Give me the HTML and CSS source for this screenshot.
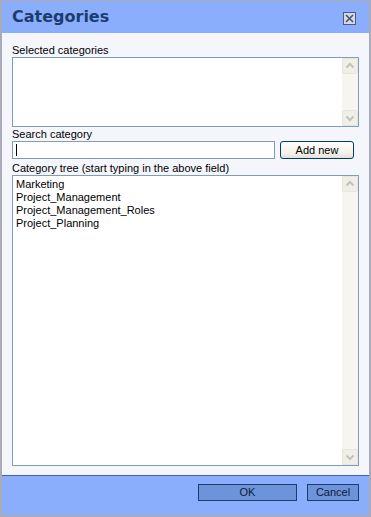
FILE: index.html
```html
<!DOCTYPE html>
<html>
<head>
<meta charset="utf-8">
<link rel="stylesheet" href="styles.css">
</head>
<body>
<div class="dialog">
  <div class="header">
    <h1 class="title">Categories</h1>
    <span class="close"><svg width="11" height="11" viewBox="0 0 11 11"><path d="M2 2 L9 9 M9 2 L2 9" stroke="#4a5470" stroke-width="1.6" fill="none"/></svg></span>
  </div>
  <div class="body">
    <div class="label">Selected categories</div>
    <div class="listbox selected">
      <div class="content"></div>
      <div class="scrollbar">
        <span class="sb-btn"><svg width="14" height="14" viewBox="0 0 14 14"><path d="M3.5 8.5 L7 5 L10.5 8.5" stroke="#c4c3bb" stroke-width="2" fill="none"/></svg></span>
        <span class="sb-track"></span>
        <span class="sb-btn"><svg width="14" height="14" viewBox="0 0 14 14"><path d="M3.5 5.5 L7 9 L10.5 5.5" stroke="#c4c3bb" stroke-width="2" fill="none"/></svg></span>
      </div>
    </div>
    <div class="label">Search category</div>
    <div class="search-row">
      <div class="input"><span class="caret"></span></div>
      <button class="add-btn">Add new</button>
    </div>
    <div class="label">Category tree (start typing in the above field)</div>
    <div class="listbox tree">
      <ul class="items">
        <li>Marketing</li>
        <li>Project_Management</li>
        <li>Project_Management_Roles</li>
        <li>Project_Planning</li>
      </ul>
      <div class="scrollbar">
        <span class="sb-btn"><svg width="14" height="14" viewBox="0 0 14 14"><path d="M3.5 8.5 L7 5 L10.5 8.5" stroke="#c4c3bb" stroke-width="2" fill="none"/></svg></span>
        <span class="sb-track"></span>
        <span class="sb-btn"><svg width="14" height="14" viewBox="0 0 14 14"><path d="M3.5 5.5 L7 9 L10.5 5.5" stroke="#c4c3bb" stroke-width="2" fill="none"/></svg></span>
      </div>
    </div>
  </div>
  <div class="footer">
    <button class="ftbtn ok">OK</button>
    <button class="ftbtn cancel">Cancel</button>
  </div>
</div>
</body>
</html>
```
FILE: styles.css
```css
html, body {
  margin: 0;
  padding: 0;
  background: #ffffff;
}
body {
  font-family: "Liberation Sans", Arial, sans-serif;
  font-size: 11px;
  color: #000;
}
.dialog {
  box-sizing: border-box;
  width: 371px;
  height: 517px;
  border-style: solid;
  border-color: #a9acb8;
  border-width: 1px 2px 2px 2px;
  display: flex;
  flex-direction: column;
  background: #f4f6fc;
}
.header {
  height: 32px;
  flex: none;
  background: #8aaefc;
  display: flex;
  align-items: center;
  justify-content: space-between;
  padding: 0 13px 0 10px;
}
.title {
  margin: 0;
  font: bold 16px "DejaVu Sans", Verdana, sans-serif;
  color: #1b3d6d;
  line-height: 20px;
}
.close {
  box-sizing: border-box;
  width: 13px;
  height: 13px;
  border: 1px solid #4f5a78;
  background: #d3d8ea;
  display: flex;
  align-items: center;
  justify-content: center;
  margin-top: 2px;
}
.close svg { display: block; }
.body {
  flex: 1;
  display: flex;
  flex-direction: column;
  padding: 10px 10px 9px;
  min-height: 0;
}
.label {
  line-height: 14px;
  white-space: nowrap;
}
.listbox {
  box-sizing: border-box;
  border: 1px solid #7f9db9;
  background: #fff;
  display: flex;
}
.selected {
  height: 70px;
  flex: none;
}
.content, .items {
  flex: 1;
}
.items {
  list-style: none;
  margin: 0;
  padding: 2px 3px;
  line-height: 13px;
}
.scrollbar {
  width: 16px;
  flex: none;
  display: flex;
  flex-direction: column;
  background: #f6f5f0;
}
.sb-btn {
  box-sizing: border-box;
  width: 16px;
  height: 16px;
  border: 1px solid #e6e5de;
  border-radius: 2px;
  background: #efeee7;
  display: flex;
  align-items: center;
  justify-content: center;
}
.sb-btn svg { display: block; }
.sb-track { flex: 1; }
.search-row {
  display: flex;
  height: 18px;
  margin-bottom: 2px;
  flex: none;
}
.input {
  box-sizing: border-box;
  width: 263px;
  height: 18px;
  border: 1px solid #7f9db9;
  background: #fff;
  display: flex;
  align-items: center;
  padding-left: 3px;
}
.caret {
  width: 1px;
  height: 12px;
  background: #000;
}
.add-btn {
  box-sizing: border-box;
  margin-left: 5px;
  width: 74px;
  height: 18px;
  border: 1px solid #003c74;
  border-radius: 3px;
  background: linear-gradient(#ffffff, #f2f1ea 70%, #e3e1d6);
  font: 11px "Liberation Sans", Arial, sans-serif;
  color: #000;
  padding: 0;
  line-height: 16px;
}
.tree {
  flex: 1;
  min-height: 0;
}
.footer {
  flex: none;
  height: 31px;
  border-top: 1px solid #3d63a8;
  background: #8aaefc;
  display: flex;
  justify-content: flex-end;
  align-items: flex-start;
  gap: 10px;
  padding: 8px 10px 0 0;
}
.ftbtn {
  box-sizing: border-box;
  height: 17px;
  border: 1px solid #1f3a6e;
  background: #6d93da;
  font: 11px "Liberation Sans", Arial, sans-serif;
  color: #0c1a38;
  padding: 0;
  line-height: 15px;
}
.ok { width: 99px; }
.cancel { width: 52px; }
```
